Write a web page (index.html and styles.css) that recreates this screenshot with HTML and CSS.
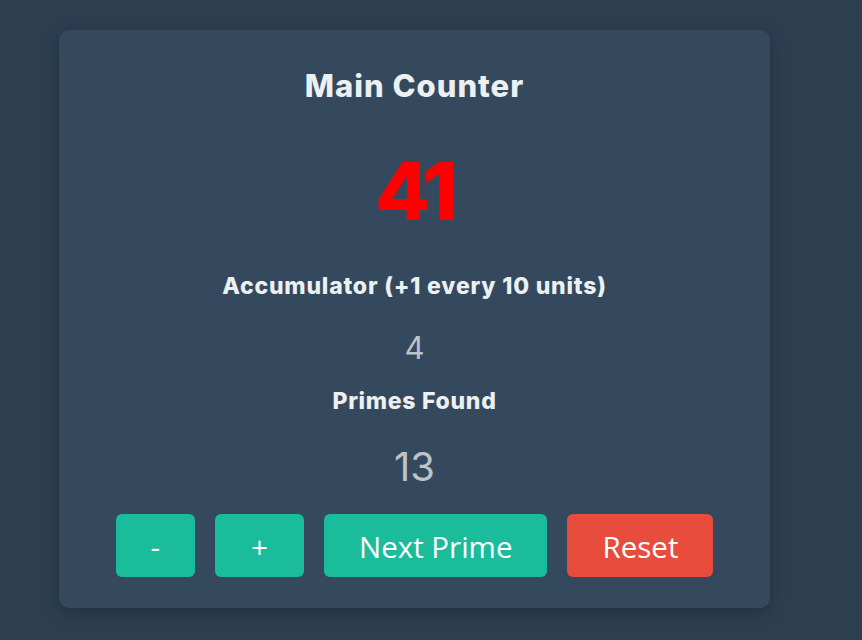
FILE: index.html
```html
<!DOCTYPE html>
<html lang="en">
<head>
<meta charset="utf-8">
<title>Main Counter</title>
<link rel="stylesheet" href="styles.css">
</head>
<body>
  <main class="card">
    <h2 class="title">Main Counter</h2>
    <div class="main-value">41</div>
    <h3 class="label label-acc">Accumulator (+1 every 10 units)</h3>
    <div class="sub-value sub-acc">4</div>
    <h3 class="label label-primes">Primes Found</h3>
    <div class="sub-value sub-primes">13</div>
    <div class="actions">
      <button class="btn btn-green">-</button>
      <button class="btn btn-green btn-plus">+</button>
      <button class="btn btn-green">Next Prime</button>
      <button class="btn btn-red">Reset</button>
    </div>
  </main>
</body>
</html>
```
FILE: styles.css
```css
* { box-sizing: border-box; }

html, body {
  margin: 0;
  padding: 0;
}

body {
  background: #2c3e50;
  min-height: 640px;
  padding-top: 30px;
  padding-left: 59px;
  font-family: "Inter", "Liberation Sans", sans-serif;
  color: #ecf0f1;
}

.card {
  width: 711px;
  background: #34495e;
  border-radius: 10px;
  box-shadow: 0 4px 16px rgba(0, 0, 0, 0.22);
  padding: 36px 0 31px;
  text-align: center;
}

.title {
  margin: 0;
  font-size: 31px;
  line-height: 40px;
  font-weight: 800;
  letter-spacing: 1px;
}

.main-value {
  margin-top: 45px;
  font-size: 80px;
  line-height: 80px;
  font-weight: 800;
  letter-spacing: -4px;
  color: #ff0000;
}

.label {
  margin: 0;
  font-size: 23px;
  line-height: 30px;
  font-weight: 800;
  letter-spacing: 0.8px;
}

.label-acc { margin-top: 40px; }
.label-primes { margin-top: 20px; letter-spacing: 0.7px; }

.sub-value {
  color: #bdc3c7;
  font-weight: 400;
}

.sub-acc {
  margin-top: 29px;
  font-size: 31px;
  line-height: 36px;
}

.sub-primes {
  margin-top: 27px;
  font-size: 40px;
  line-height: 48px;
}

.actions {
  margin-top: 23px;
  display: flex;
  justify-content: center;
  gap: 20px;
}

.btn {
  border: none;
  border-radius: 6px;
  height: 63px;
  padding: 2px 35px 0;
  font-family: "Open Sans", "Noto Sans", sans-serif;
  font-size: 29.5px;
  line-height: 61px;
  color: #ffffff;
  cursor: pointer;
}

.btn-plus { padding: 2px 36px 0; }

.btn-green { background: #1abc9c; }
.btn-red { background: #e74c3c; }
```
